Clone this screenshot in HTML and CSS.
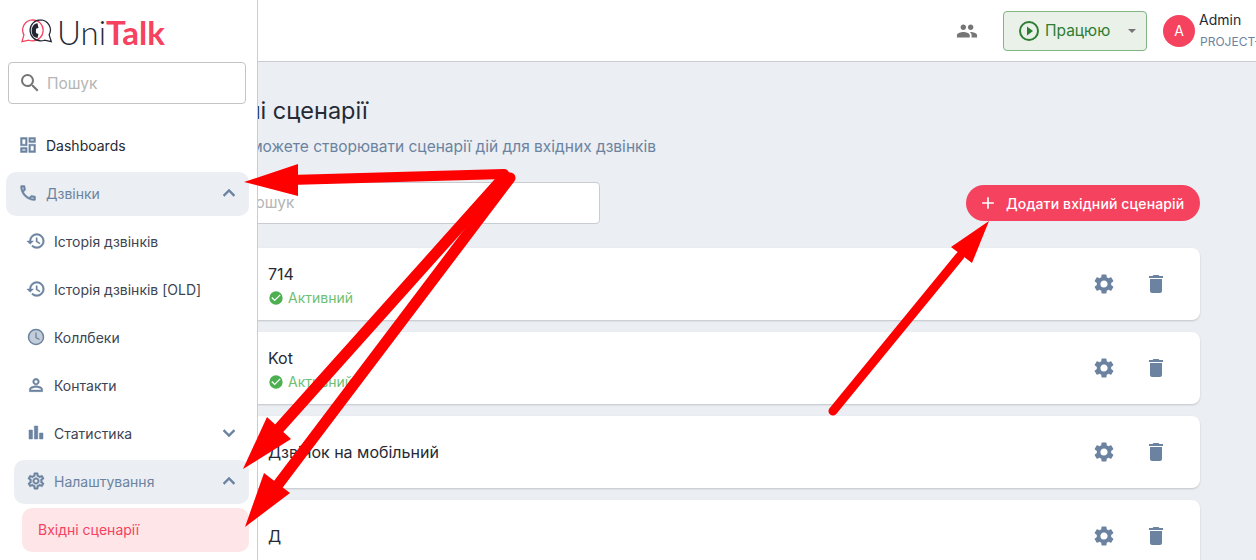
FILE: index.html
```html
<!DOCTYPE html>
<html lang="uk">
<head>
    <meta charset="UTF-8">
    <meta name="viewport" content="width=device-width, initial-scale=1.0">
    <title>Вхідні сценарії</title>
    <link rel="stylesheet" href="styles.css">
</head>
<body>
    <!-- Sidebar -->
    <aside class="sidebar">
        <div class="logo">
            <svg class="logo-mark" width="33" height="26" viewBox="0 0 34 26">
                <path d="M12 1.500a10.500 10.500 0 0 0-9 15.500L1 24l7-1.500a11 11 0 0 0 4 .7 10.800 10.800 0 0 0 0-21.700z" fill="none" stroke="#f4425f" stroke-width="1.300"/>
                <path d="M20 1.500a10.500 10.500 0 0 1 9 15.500l2.200 7-7-1.500a11 11 0 0 1-4 .7 10.800 10.800 0 0 1 0-21.700z" fill="none" stroke="#222733" stroke-width="1.300"/>
                <path d="M17 5c-4 .2-6 4-6 8 0 4 2.400 7 6 7.200l1-4.200-2.200-.6c-.6-1.500-.6-3.400 0-5l2.200-.6z" fill="#222733"/>
            </svg>
            <span class="logo-uni">Uni</span><span class="logo-talk">Talk</span>
        </div>

        <div class="side-search">
            <svg width="24" height="24" viewBox="0 0 24 24"><path fill="#757575" d="M15.500 14h-.79l-.28-.27A6.470 6.470 0 0 0 16 9.500 6.500 6.500 0 1 0 9.500 16c1.610 0 3.090-.59 4.230-1.570l.27.28v.79l5 4.990L20.490 19l-4.990-5zm-6 0C7.010 14 5 11.990 5 9.500S7.010 5 9.500 5 14 7.010 14 9.500 11.990 14 9.500 14z"/></svg>
            <span>Пошук</span>
        </div>

        <nav class="menu">
            <div class="menu-item dark">
                <svg width="20" height="20" viewBox="0 0 24 24"><path d="M3 13h8V3H3v10zm2-8h4v6H5V5zm8 16h8V11h-8v10zm2-8h4v6h-4v-6zM13 3v6h8V3h-8zm6 4h-4V5h4v2zM3 21h8v-6H3v6zm2-4h4v2H5v-2z"/></svg>
                <span>Dashboards</span>
            </div>
            <div class="menu-item open">
                <svg width="20" height="20" viewBox="0 0 24 24"><path d="M6.540 5c.06.890.21 1.760.45 2.590l-1.200 1.200c-.41-1.200-.67-2.470-.76-3.790h1.510m9.860 12.020c.85.240 1.720.39 2.600.45v1.490c-1.320-.09-2.590-.35-3.800-.75l1.200-1.190M7.500 3H4c-.55 0-1 .45-1 1 0 9.390 7.610 17 17 17 .55 0 1-.45 1-1v-3.490c0-.55-.45-1-1-1-1.240 0-2.450-.2-3.570-.57a.84.84 0 0 0-.31-.05c-.26 0-.51.100-.71.290l-2.200 2.200a15.150 15.150 0 0 1-6.590-6.590l2.200-2.200c.28-.28.36-.67.25-1.020A11.360 11.360 0 0 1 8.500 4c0-.55-.45-1-1-1z"/></svg>
                <span>Дзвінки</span>
                <svg class="chevron" width="24" height="24" viewBox="0 0 24 24"><path d="M7.410 15.410 12 10.830l4.590 4.580L18 14l-6-6-6 6z"/></svg>
            </div>
            <div class="menu-item sub">
                <svg width="20" height="20" viewBox="0 0 24 24"><path d="M13 3a9 9 0 0 0-9 9H1l3.890 3.890.07.14L9 12H6c0-3.870 3.130-7 7-7s7 3.130 7 7-3.130 7-7 7c-1.930 0-3.680-.79-4.940-2.060l-1.420 1.420A8.954 8.954 0 0 0 13 21a9 9 0 0 0 0-18zm-1 5v5l4.280 2.540.72-1.210-3.500-2.080V8H12z"/></svg>
                <span>Історія дзвінків</span>
            </div>
            <div class="menu-item sub">
                <svg width="20" height="20" viewBox="0 0 24 24"><path d="M13 3a9 9 0 0 0-9 9H1l3.890 3.890.07.14L9 12H6c0-3.870 3.130-7 7-7s7 3.130 7 7-3.130 7-7 7c-1.930 0-3.680-.79-4.940-2.060l-1.420 1.420A8.954 8.954 0 0 0 13 21a9 9 0 0 0 0-18zm-1 5v5l4.280 2.540.72-1.210-3.500-2.080V8H12z"/></svg>
                <span>Історія дзвінків [OLD]</span>
            </div>
            <div class="menu-item sub">
                <svg width="20" height="20" viewBox="0 0 20 20"><circle cx="10" cy="10" r="7.500" fill="#c3cdd9" stroke="#6b83a0" stroke-width="1.500"/><path d="M10 5.500V10.500l3.500 2" fill="none" stroke="#6b83a0" stroke-width="1.300"/></svg>
                <span>Коллбеки</span>
            </div>
            <div class="menu-item sub">
                <svg width="20" height="20" viewBox="0 0 24 24"><path d="M12 5.900a2.100 2.100 0 1 1 0 4.200 2.100 2.100 0 0 1 0-4.200m0 9c2.970 0 6.100 1.460 6.100 2.100v1.100H5.900V17c0-.64 3.130-2.100 6.100-2.100M12 4C9.790 4 8 5.790 8 8s1.790 4 4 4 4-1.790 4-4-1.790-4-4-4zm0 9c-2.670 0-8 1.340-8 4v3h16v-3c0-2.660-5.330-4-8-4z"/></svg>
                <span>Контакти</span>
            </div>
            <div class="menu-item sub">
                <svg width="20" height="20" viewBox="0 0 20 20"><path d="M3 7h3.500v9H3zM8.300 3h3.500v13H8.300zM13.500 10H17v6h-3.500z"/></svg>
                <span>Статистика</span>
                <svg class="chevron" width="24" height="24" viewBox="0 0 24 24"><path d="M7.410 8.590 12 13.170l4.590-4.580L18 10l-6 6-6-6z"/></svg>
            </div>
            <div class="menu-item sub open">
                <svg width="20" height="20" viewBox="0 0 24 24"><path d="M19.430 12.980c.04-.32.070-.64.070-.98s-.03-.66-.07-.98l2.110-1.650c.19-.15.240-.42.120-.64l-2-3.460c-.12-.22-.39-.3-.61-.22l-2.490 1c-.52-.4-1.080-.73-1.690-.98l-.38-2.650A.488.488 0 0 0 14 2h-4c-.25 0-.46.180-.49.420l-.38 2.650c-.61.250-1.170.590-1.690.98l-2.490-1c-.23-.090-.49 0-.61.220l-2 3.460c-.13.220-.07.490.12.640l2.110 1.650c-.04.320-.07.650-.07.980s.03.660.07.980l-2.110 1.650c-.19.150-.24.420-.12.640l2 3.460c.12.220.39.300.61.220l2.490-1c.52.400 1.080.730 1.690.980l.38 2.650c.03.240.24.420.49.420h4c.25 0 .46-.18.49-.42l.38-2.650c.61-.25 1.170-.59 1.690-.98l2.490 1c.23.090.49 0 .61-.22l2-3.460c.12-.22.070-.49-.12-.64l-2.110-1.650zM17.450 11.270c.04.310.05.520.05.730 0 .21-.02.430-.05.730l-.14 1.130.89.700 1.080.840-.7 1.210-1.270-.51-1.040-.42-.9.680c-.43.320-.84.560-1.250.730l-1.060.43-.16 1.130-.2 1.350h-1.400l-.19-1.350-.16-1.130-1.060-.43c-.43-.18-.83-.41-1.230-.71l-.91-.7-1.060.43-1.270.51-.7-1.210 1.080-.84.890-.7-.14-1.130c-.03-.31-.05-.54-.05-.74s.02-.43.05-.73l.14-1.130-.89-.7-1.080-.84.7-1.210 1.270.51 1.040.42.9-.68c.43-.32.840-.56 1.250-.73l1.060-.43.160-1.130.2-1.350h1.390l.19 1.350.16 1.130 1.060.43c.43.18.83.41 1.230.71l.91.7 1.060-.43 1.270-.51.7 1.210-1.070.85-.89.7.140 1.130zM12 8c-2.210 0-4 1.790-4 4s1.790 4 4 4 4-1.790 4-4-1.790-4-4-4zm0 6c-1.100 0-2-.9-2-2s.9-2 2-2 2 .9 2 2-.9 2-2 2z"/></svg>
                <span>Налаштування</span>
                <svg class="chevron" width="24" height="24" viewBox="0 0 24 24"><path d="M7.410 15.410 12 10.830l4.590 4.580L18 14l-6-6-6 6z"/></svg>
            </div>
            <div class="menu-item selected">
                <span>Вхідні сценарії</span>
            </div>
        </nav>
    </aside>

    <!-- Top bar -->
    <header class="topbar">
        <svg class="team-icon" width="22" height="22" viewBox="0 0 24 24"><path fill="#757575" d="M16 11c1.660 0 2.990-1.340 2.990-3S17.660 5 16 5c-1.660 0-3 1.340-3 3s1.340 3 3 3zm-8 0c1.660 0 2.990-1.340 2.990-3S9.660 5 8 5C6.340 5 5 6.340 5 8s1.340 3 3 3zm0 2c-2.330 0-7 1.170-7 3.500V19h14v-2.500c0-2.330-4.670-3.500-7-3.500zm8 0c-.29 0-.62.020-.97.050 1.160.840 1.970 1.970 1.970 3.450V19h6v-2.500c0-2.330-4.670-3.500-7-3.500z"/></svg>
        <div class="status-btn">
            <svg width="24" height="24" viewBox="0 0 24 24"><path fill="#2e7d32" d="M12 2a10 10 0 1 0 0 20 10 10 0 0 0 0-20zm0 18a8 8 0 1 1 0-16 8 8 0 0 1 0 16zm-2-3.500 6-4.500-6-4.500v9z"/></svg>
            <span>Працюю</span>
            <i class="caret"></i>
        </div>
        <div class="avatar">A</div>
        <div class="user">
            <div class="user-name">Admin</div>
            <div class="user-project">PROJECT-1</div>
        </div>
    </header>

    <!-- Page content -->
    <main class="content">
        <h1>Вхідні сценарії</h1>
        <p class="subtitle">Ви можете створювати сценарії дій для вхідних дзвінків</p>
        <div class="toolbar">
            <div class="page-search">Пошук</div>
            <div class="add-btn">
                <svg width="20" height="20" viewBox="0 0 24 24"><path fill="#fff" d="M19 13h-6v6h-2v-6H5v-2h6V5h2v6h6v2z"/></svg>
                <span>Додати вхідний сценарій</span>
            </div>
        </div>

        <div class="card">
            <div class="card-text with-status">
                <div class="card-name">714</div>
                <div class="card-status">
                    <svg width="16" height="16" viewBox="0 0 24 24"><path fill="#4caf50" d="M12 2a10 10 0 1 0 0 20 10 10 0 0 0 0-20zm-2 15-5-5 1.410-1.410L10 14.170l7.590-7.590L19 8l-9 9z"/></svg>
                    <span>Активний</span>
                </div>
            </div>
            <svg class="action" width="24" height="24" viewBox="0 0 24 24"><path d="M19.140 12.940c.04-.3.060-.61.060-.94 0-.32-.02-.64-.07-.94l2.030-1.580a.49.490 0 0 0 .12-.61l-1.920-3.320a.488.488 0 0 0-.59-.22l-2.390.96c-.5-.38-1.030-.7-1.620-.94l-.36-2.540a.484.484 0 0 0-.48-.41h-3.840c-.24 0-.43.170-.47.410l-.36 2.540c-.59.240-1.130.570-1.620.94l-2.390-.96c-.22-.08-.47 0-.59.220L2.740 8.870c-.12.210-.08.470.12.610l2.030 1.580c-.05.300-.09.630-.09.940s.02.640.07.940l-2.030 1.580a.49.490 0 0 0-.12.610l1.920 3.320c.12.220.37.290.59.220l2.390-.96c.5.380 1.030.700 1.620.940l.36 2.540c.05.240.24.410.48.410h3.840c.24 0 .44-.17.470-.41l.36-2.540c.59-.24 1.130-.56 1.620-.94l2.390.96c.22.080.47 0 .59-.22l1.920-3.320c.12-.22.070-.47-.12-.61l-2.010-1.580zM12 15.600A3.610 3.610 0 0 1 8.400 12c0-1.980 1.620-3.600 3.600-3.600s3.600 1.620 3.600 3.600-1.620 3.600-3.600 3.600z"/></svg>
            <svg class="action" width="24" height="24" viewBox="0 0 24 24"><path d="M6 19c0 1.100.9 2 2 2h8c1.100 0 2-.9 2-2V7H6v12zM19 4h-3.500l-1-1h-5l-1 1H5v2h14V4z"/></svg>
        </div>
        <div class="card">
            <div class="card-text with-status">
                <div class="card-name">Kot</div>
                <div class="card-status">
                    <svg width="16" height="16" viewBox="0 0 24 24"><path fill="#4caf50" d="M12 2a10 10 0 1 0 0 20 10 10 0 0 0 0-20zm-2 15-5-5 1.410-1.410L10 14.170l7.590-7.590L19 8l-9 9z"/></svg>
                    <span>Активний</span>
                </div>
            </div>
            <svg class="action" width="24" height="24" viewBox="0 0 24 24"><path d="M19.140 12.940c.04-.3.060-.61.060-.94 0-.32-.02-.64-.07-.94l2.030-1.580a.49.490 0 0 0 .12-.61l-1.920-3.320a.488.488 0 0 0-.59-.22l-2.390.96c-.5-.38-1.030-.7-1.620-.94l-.36-2.540a.484.484 0 0 0-.48-.41h-3.840c-.24 0-.43.170-.47.410l-.36 2.540c-.59.240-1.130.570-1.620.94l-2.390-.96c-.22-.08-.47 0-.59.220L2.740 8.870c-.12.210-.08.470.12.610l2.030 1.580c-.05.300-.09.630-.09.940s.02.640.07.940l-2.030 1.580a.49.490 0 0 0-.12.610l1.920 3.320c.12.220.37.290.59.220l2.390-.96c.5.380 1.030.700 1.620.940l.36 2.540c.05.240.24.410.48.410h3.840c.24 0 .44-.17.470-.41l.36-2.540c.59-.24 1.130-.56 1.620-.94l2.390.96c.22.080.47 0 .59-.22l1.920-3.320c.12-.22.070-.47-.12-.61l-2.010-1.580zM12 15.600A3.610 3.610 0 0 1 8.400 12c0-1.980 1.620-3.600 3.600-3.600s3.600 1.620 3.600 3.600-1.620 3.600-3.600 3.600z"/></svg>
            <svg class="action" width="24" height="24" viewBox="0 0 24 24"><path d="M6 19c0 1.100.9 2 2 2h8c1.100 0 2-.9 2-2V7H6v12zM19 4h-3.500l-1-1h-5l-1 1H5v2h14V4z"/></svg>
        </div>
        <div class="card">
            <div class="card-text">
                <div class="card-name">Дзвінок на мобільний</div>
            </div>
            <svg class="action" width="24" height="24" viewBox="0 0 24 24"><path d="M19.140 12.940c.04-.3.060-.61.060-.94 0-.32-.02-.64-.07-.94l2.030-1.580a.49.490 0 0 0 .12-.61l-1.920-3.320a.488.488 0 0 0-.59-.22l-2.390.96c-.5-.38-1.030-.7-1.620-.94l-.36-2.540a.484.484 0 0 0-.48-.41h-3.840c-.24 0-.43.170-.47.410l-.36 2.540c-.59.240-1.130.570-1.620.94l-2.390-.96c-.22-.08-.47 0-.59.220L2.740 8.870c-.12.210-.08.470.12.610l2.030 1.580c-.05.300-.09.630-.09.940s.02.640.07.940l-2.030 1.580a.49.490 0 0 0-.12.610l1.920 3.320c.12.220.37.290.59.220l2.390-.96c.5.380 1.030.700 1.620.940l.36 2.540c.05.240.24.410.48.410h3.840c.24 0 .44-.17.470-.41l.36-2.540c.59-.24 1.130-.56 1.620-.94l2.390.96c.22.080.47 0 .59-.22l1.920-3.320c.12-.22.070-.47-.12-.61l-2.010-1.580zM12 15.600A3.610 3.610 0 0 1 8.400 12c0-1.980 1.620-3.600 3.600-3.600s3.600 1.620 3.600 3.600-1.620 3.600-3.600 3.600z"/></svg>
            <svg class="action" width="24" height="24" viewBox="0 0 24 24"><path d="M6 19c0 1.100.9 2 2 2h8c1.100 0 2-.9 2-2V7H6v12zM19 4h-3.500l-1-1h-5l-1 1H5v2h14V4z"/></svg>
        </div>
        <div class="card">
            <div class="card-text">
                <div class="card-name">Д</div>
            </div>
            <svg class="action" width="24" height="24" viewBox="0 0 24 24"><path d="M19.140 12.940c.04-.3.060-.61.060-.94 0-.32-.02-.64-.07-.94l2.030-1.580a.49.490 0 0 0 .12-.61l-1.920-3.320a.488.488 0 0 0-.59-.22l-2.390.96c-.5-.38-1.030-.7-1.620-.94l-.36-2.540a.484.484 0 0 0-.48-.41h-3.840c-.24 0-.43.170-.47.410l-.36 2.540c-.59.240-1.130.570-1.620.94l-2.390-.96c-.22-.08-.47 0-.59.220L2.740 8.870c-.12.210-.08.470.12.610l2.030 1.580c-.05.300-.09.630-.09.940s.02.640.07.940l-2.030 1.580a.49.490 0 0 0-.12.610l1.920 3.320c.12.220.37.290.59.220l2.390-.96c.5.380 1.030.700 1.620.940l.36 2.540c.05.240.24.410.48.410h3.840c.24 0 .44-.17.470-.41l.36-2.540c.59-.24 1.130-.56 1.620-.94l2.390.96c.22.080.47 0 .59-.22l1.920-3.320c.12-.22.070-.47-.12-.61l-2.010-1.580zM12 15.600A3.610 3.610 0 0 1 8.400 12c0-1.980 1.620-3.600 3.600-3.600s3.600 1.620 3.600 3.600-1.620 3.600-3.600 3.600z"/></svg>
            <svg class="action" width="24" height="24" viewBox="0 0 24 24"><path d="M6 19c0 1.100.9 2 2 2h8c1.100 0 2-.9 2-2V7H6v12zM19 4h-3.500l-1-1h-5l-1 1H5v2h14V4z"/></svg>
        </div>
    </main>

    <!-- Red annotation arrows drawn over the screenshot -->
    <svg class="arrows" width="1256" height="560" viewBox="0 0 1256 560">
        <g class="arrow-shafts">
            <line x1="504" y1="174" x2="290" y2="180"/>
            <line class="wide" x1="505" y1="176" x2="274" y2="434"/>
            <line class="wide" x1="510" y1="178" x2="274" y2="490"/>
            <line class="thin" x1="833" y1="411" x2="960" y2="256"/>
        </g>
        <g class="arrow-heads">
            <path d="M244 182 298 164V196Z"/>
            <path d="M243 469 267 417 291 439Z"/>
            <path d="M245 527 264 473 290 493Z"/>
            <path d="M989 221 951 247 972 263Z"/>
        </g>
    </svg>
</body>
</html>
```

FILE: styles.css
```css
* {
    box-sizing: border-box;
}
html, body {
    height: 100%;
}
body {
    margin: 0;
    height: 560px;
    overflow: hidden;
    position: relative;
    background-color: #ebeef3;
    font-family: Inter, "Noto Sans", sans-serif;
    color: #252a36;
}

/* Sidebar */
.sidebar {
    position: absolute;
    top: 0;
    left: 0;
    bottom: 0;
    width: 258px;
    z-index: 2;
    background: #fff;
    border-right: 1px solid #c9ccd1;
}
.logo {
    height: 62px;
    padding: 18px 0 0 21px;
    display: flex;
    align-items: flex-start;
    font-family: Lato, sans-serif;
    font-size: 33px;
    line-height: 28px;
}
.logo-mark {
    margin-right: 3px;
}
.logo-uni {
    color: #252a36;
    font-weight: 300;
}
.logo-talk {
    color: #f4425f;
    font-weight: 700;
}
.side-search {
    margin-left: 8px;
    width: 238px;
    height: 42px;
    border: 1px solid #c4c4c4;
    border-radius: 4px;
    padding-left: 9px;
    display: flex;
    align-items: center;
    gap: 5px;
    font-size: 15.5px;
    color: #b5b5b5;
}
.menu {
    margin-top: 20px;
    display: flex;
    flex-direction: column;
    gap: 4px;
}
.menu-item {
    margin-left: 6px;
    width: 243px;
    height: 44px;
    padding-left: 12px;
    padding-bottom: 2px;
    border-radius: 10px;
    display: flex;
    align-items: center;
    gap: 8px;
    font-size: 14px;
    color: #3d4452;
}
.menu-item svg {
    fill: #6b83a0;
    stroke: #6b83a0;
    stroke-width: 0.5;
    flex: none;
}
.menu-item.dark {
    color: #252a36;
}
.menu-item.sub {
    margin-left: 14px;
    width: 235px;
}
.menu-item.open {
    background: #ebeef2;
    color: #6b83a0;
}
.menu-item.selected {
    margin-left: 22px;
    width: 227px;
    padding-left: 16px;
    background: #fde5e8;
    color: #f4425f;
}
.chevron {
    margin-left: auto;
    margin-right: 8px;
}

/* Top bar */
.topbar {
    height: 62px;
    background: #fff;
    border-bottom: 1px solid #c9ccd1;
    display: flex;
    align-items: center;
    padding-left: 956px;
}
.team-icon {
    flex: none;
}
.status-btn {
    flex: none;
    margin-left: 25px;
    width: 144px;
    height: 40px;
    border: 1px solid #81b584;
    border-radius: 4px;
    background: #e9f1e9;
    padding-left: 13px;
    display: flex;
    align-items: center;
    gap: 4px;
    font-size: 15.5px;
    color: #2e7d32;
}
.caret {
    margin-left: auto;
    margin-right: 10px;
    border-left: 4px solid transparent;
    border-right: 4px solid transparent;
    border-top: 4px solid #757575;
}
.avatar {
    flex: none;
    margin-left: 16px;
    width: 32px;
    height: 32px;
    border-radius: 50%;
    background: #f4425f;
    color: #fff;
    font-size: 14px;
    display: flex;
    align-items: center;
    justify-content: center;
}
.user {
    flex: none;
    margin-left: 4px;
}
.user-name {
    font-size: 14px;
    line-height: 20px;
}
.user-project {
    margin-top: 3px;
    padding-left: 1px;
    font-size: 12px;
    line-height: 18px;
    color: #6b83a0;
}

/* Page content */
.content {
    margin-left: 196px;
    width: 1004px;
}
h1 {
    margin: 35px 0 0 2px;
    font-size: 23.5px;
    font-weight: 400;
    line-height: 28px;
}
.subtitle {
    margin: 12px 0 0 31px;
    font-size: 15.5px;
    line-height: 20px;
    color: #6b83a0;
}
.toolbar {
    margin-top: 25px;
    display: flex;
    align-items: center;
    justify-content: space-between;
}
.page-search {
    margin-left: 32px;
    width: 372px;
    height: 42px;
    padding-left: 15px;
    background: #fff;
    border: 1px solid #c9ccd1;
    border-radius: 4px;
    font-size: 15.5px;
    line-height: 40px;
    color: #b5b5b5;
}
.add-btn {
    width: 234px;
    height: 36px;
    padding-left: 12px;
    border-radius: 18px;
    background: #f4425f;
    color: #fff;
    font-size: 14px;
    font-weight: 500;
    letter-spacing: 0.13px;
    display: flex;
    align-items: center;
    gap: 8px;
}
.card {
    margin-top: 12px;
    height: 72px;
    padding-left: 72px;
    background: #fff;
    border-radius: 8px;
    box-shadow: 0 1px 2px rgba(0, 0, 0, 0.18);
    display: flex;
    align-items: center;
}
.toolbar + .card {
    margin-top: 24px;
}
.card-text {
    flex: 1;
}
.card-text.with-status {
    padding-top: 2px;
}
.card-name {
    font-size: 16px;
    line-height: 22px;
}
.card-status {
    margin-top: 4px;
    display: flex;
    align-items: center;
    gap: 4px;
    font-size: 14px;
    line-height: 18px;
    color: #6fbf73;
}
.action {
    fill: #6b83a0;
    flex: none;
    margin-right: 28px;
}
.action:last-child {
    margin-right: 32px;
}

/* Annotation layer */
.arrows {
    position: absolute;
    top: 0;
    left: 0;
    z-index: 3;
}
.arrow-shafts {
    stroke: #ff0000;
    stroke-width: 10;
    stroke-linecap: round;
}
.arrow-shafts .wide {
    stroke-width: 11;
}
.arrow-shafts .thin {
    stroke-width: 9;
}
.arrow-heads {
    fill: #ff0000;
}
```
